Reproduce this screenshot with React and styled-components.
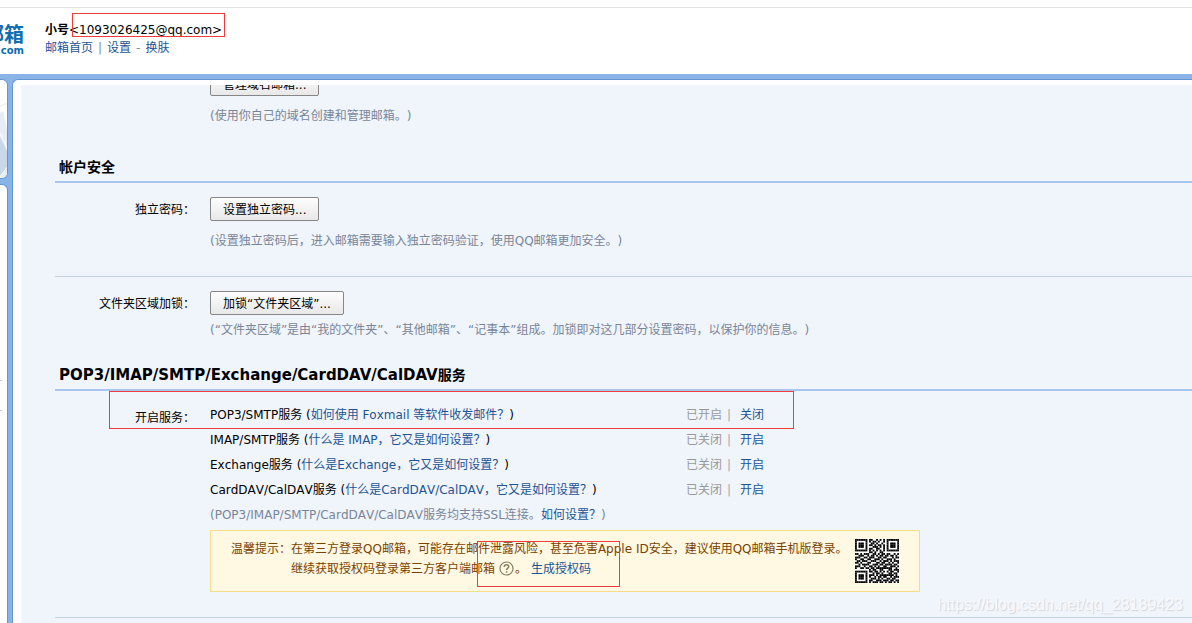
import React from "react";
import styled, { createGlobalStyle } from "styled-components";

const GlobalStyle = createGlobalStyle`
  * {
    box-sizing: border-box;
  }
  body {
    margin: 0;
    background: #fff;
    color: #000;
    font: 12px/20px "DejaVu Sans", "Noto Sans CJK SC", sans-serif;
    font-kerning: none;
    text-spacing-trim: space-all;
    overflow: hidden;
  }
  button {
    font: inherit;
  }
`;

const Page = styled.div`
  position: relative;
  display: flex;
  flex-direction: column;
  height: 100vh;
  overflow: hidden;
`;

const Header = styled.header`
  display: flex;
  flex: none;
  gap: 21px;
  height: 67px;
  margin-top: 7px;
  border-top: 1px solid #dfe3e6;
`;

const Logo = styled.div`
  display: flex;
  flex-direction: column;
  align-items: flex-end;
  width: 24px;
  padding-top: 17px;
  overflow: hidden;
  color: #0f6db0;
  font-weight: bold;
  white-space: nowrap;
`;

const LogoName = styled.span`
  font-size: 20px;
  line-height: 20px;
`;

const LogoDomain = styled.span`
  font-size: 10px;
  line-height: 12px;
`;

const Account = styled.div`
  padding-top: 13px;
  line-height: 18px;
`;

const Email = styled.span`
  position: relative;
`;

const A = styled.a`
  color: #1e5494;
  text-decoration: none;
  &:hover {
    text-decoration: underline;
  }
`;

const Bar = styled.span`
  margin: 0 5px;
  color: ${props => props.$color || "#7d8ea3"};
`;

const Mark = styled.span`
  position: absolute;
  inset: ${props => props.$inset};
  width: ${props => props.$width || "auto"};
  height: ${props => props.$height || "auto"};
  border: 1px solid #f03c3c;
  pointer-events: none;
`;

const Body = styled.div`
  display: flex;
  flex: 1;
  gap: 4px;
  min-height: 0;
  padding-top: 5px;
  background: #8ab4e8;
`;

const Sidebar = styled.aside`
  display: flex;
  flex-direction: column;
  gap: 5px;
  width: 8px;
`;

const SidePanel = styled.div`
  flex: ${props => (props.$grow ? "1" : "0 0 100px")};
  border: solid #6496d2;
  border-width: ${props => (props.$grow ? "1px 1px 0 0" : "1px 1px 1px 0")};
  border-radius: ${props => (props.$grow ? "0 6px 0 0" : "0 6px 6px 0")};
  background: #fff;
  overflow: hidden;
  svg {
    display: block;
  }
`;

const SideGroup = styled.div`
  width: 2px;
  height: ${props => props.$height};
  border-bottom: 1px solid #d0d0d0;
`;

const Main = styled.main`
  display: flex;
  flex: 1;
  min-width: 0;
  padding: 5px 0 0 8px;
  border: solid #6496d2;
  border-width: 1px 0 0 1px;
  border-radius: 6px 0 0 0;
  background: #fff;
`;

const Content = styled.div`
  flex: 1;
  min-width: 0;
  padding-left: 34px;
  overflow: hidden;
  background: #f0f4fb;
`;

const Title = styled.h2`
  margin: ${props => props.$top} 0 0;
  padding: 0 4px 4px;
  border-bottom: 2px solid #a9c7ec;
  font-size: 14px;
  line-height: 20px;
`;

const Protocols = styled.span`
  font-size: 15px;
  font-kerning: normal;
`;

const Row = styled.div`
  position: relative;
  display: grid;
  grid-template-columns: 140px minmax(0, 1fr);
  column-gap: 15px;
  padding-top: 14px;
`;

const ScrolledRow = styled(Row)`
  margin-top: -27px;
`;

const ServiceRow = styled(Row)`
  padding-top: 12px;
`;

const Label = styled.label`
  padding-top: 3px;
  text-align: right;
`;

const ServiceLabel = styled.div`
  padding-top: 5px;
  text-align: right;
`;

const Button = styled.button`
  height: 24px;
  padding: 2px 12px 0;
  border: 1px solid #868686;
  border-radius: 2px;
  background: linear-gradient(#fdfdfd, #e8e8e8);
  color: #000;
  cursor: pointer;
`;

const Hint = styled.p`
  margin: ${props => props.$top || "10px"} 0 0;
  color: #798699;
`;

const Divider = styled.hr`
  height: 1px;
  margin: 25px 0 0;
  border: 0;
  background: #c5d2e2;
`;

const Service = styled.div`
  display: grid;
  grid-template-columns: 476px 1fr;
  line-height: 25px;
`;

const State = styled.span`
  color: #999;
`;

const Note = styled.div`
  color: #798699;
  line-height: 25px;
`;

const Notice = styled.div`
  position: relative;
  display: flex;
  justify-content: space-between;
  max-width: 710px;
  height: 62px;
  margin-top: 2px;
  padding: 8px 20px;
  border: 1px solid #f8dc88;
  background: #fff8e2;
  color: #7b4100;
  white-space: nowrap;
`;

const NoticeText = styled.div`
  display: flex;
`;

const HelpIcon = styled.svg`
  margin: 0 1px 0 4px;
  vertical-align: -3px;
`;

const NoticeLink = styled(A)`
  margin-left: 4px;
`;

const Watermark = styled.div`
  position: absolute;
  right: 9px;
  bottom: 8px;
  color: #f8fafc;
  font: 16px/20px "Liberation Sans", sans-serif;
  text-shadow: 1px 1px 1px #d0d4da;
`;

const services = [
  { name: "POP3/SMTP服务", help: "如何使用 Foxmail 等软件收发邮件？", open: true },
  { name: "IMAP/SMTP服务", help: "什么是 IMAP，它又是如何设置？" },
  { name: "Exchange服务", help: "什么是Exchange，它又是如何设置？" },
  { name: "CardDAV/CalDAV服务", help: "什么是CardDAV/CalDAV，它又是如何设置？" }
];

const qrRows = [
  "1111111011001010101111111",
  "1000001010110100101000001",
  "1011101001101001001011101",
  "1011101011010110101011101",
  "1011101000111010101011101",
  "1000001011001100101000001",
  "1111111010101010101111111",
  "0000000011010011000000000",
  "1101011100110101101100101",
  "0011100101101011011011010",
  "1110011011100110110001011",
  "1001100110011101001110100",
  "0110111001110010111010111",
  "1101000110001101100101001",
  "0010111100111011011110110",
  "1110010011010100110011101",
  "1001101101101111111110010",
  "0000000010110011000110111",
  "1111111011011010101011001",
  "1000001000101101000110110",
  "1011101011101011111111010",
  "1011101010010110110010111",
  "1011101001110101001101100",
  "1000001011001110111011011",
  "1111111010111011010110101"
];

const QrCode = () => (
  <svg width="44" height="44" viewBox="0 0 25 25">
    <rect width="25" height="25" fill="#fff" />
    {qrRows.map((row, y) =>
      row
        .split("")
        .map((cell, x) =>
          cell === "1" ? (
            <rect key={`${x}-${y}`} x={x} y={y} width="1.04" height="1.04" />
          ) : null
        )
    )}
  </svg>
);

const Help = () => (
  <HelpIcon width="15" height="15" viewBox="0 0 15 15" fill="none" stroke="#85805f">
    <circle cx="7.5" cy="7.5" r="6.5" strokeWidth="1.2" />
    <path d="M5.3 6V5.5C5.3 4.3 6.2 3.7 7.5 3.7S9.8 4.4 9.8 5.6C9.8 7.1 7.6 7.2 7.6 9" strokeWidth="1.5" />
    <path d="M7.6 10.2V11.7" strokeWidth="1.6" />
  </HelpIcon>
);

const SideArt = () => (
  <svg width="8" height="100" viewBox="0 0 8 100">
    <path d="M0 27L4 24L8 24" fill="none" stroke="#e3eaf2" />
    <path d="M0 33L3 31L8 53V100H0Z" fill="#e6edf5" />
    <path d="M0 57Q5 66 8 74V88L0 96Z" fill="#c9d8e9" />
    <path d="M0 53Q5 62 8 71M0 97L8 86" fill="none" stroke="#fff" />
  </svg>
);

const App = () => (
  <Page lang="zh-CN">
    <GlobalStyle />
    <Header>
      <Logo>
        <LogoName>邮箱</LogoName>
        <LogoDomain>.com</LogoDomain>
      </Logo>
      <Account>
        <div>
          <b>小号</b>
          <Email>
            &lt;1093026425@qq.com&gt;
            <Mark $inset="-10px -3px 0 3px" />
          </Email>
        </div>
        <div>
          <A href="#">邮箱首页</A>
          <Bar>|</Bar>
          <A href="#">设置</A>
          <Bar>-</Bar>
          <A href="#">换肤</A>
        </div>
      </Account>
    </Header>
    <Body>
      <Sidebar>
        <SidePanel>
          <SideArt />
        </SidePanel>
        <SidePanel $grow>
          <SideGroup $height="196px" />
          <SideGroup $height="30px" />
        </SidePanel>
      </Sidebar>
      <Main>
        <Content>
          <ScrolledRow>
            <span />
            <div>
              <Button type="button">管理域名邮箱...</Button>
              <Hint>(使用你自己的域名创建和管理邮箱。)</Hint>
            </div>
          </ScrolledRow>

          <Title $top="31px">帐户安全</Title>
          <Row>
            <Label htmlFor="password">独立密码：</Label>
            <div>
              <Button id="password" type="button">设置独立密码...</Button>
              <Hint>(设置独立密码后，进入邮箱需要输入独立密码验证，使用QQ邮箱更加安全。)</Hint>
            </div>
          </Row>
          <Divider />
          <Row>
            <Label htmlFor="lock">文件夹区域加锁：</Label>
            <div>
              <Button id="lock" type="button">加锁“文件夹区域”...</Button>
              <Hint $top="5px">
                (“文件夹区域”是由“我的文件夹”、“其他邮箱”、“记事本”组成。加锁即对这几部分设置密码，以保护你的信息。)
              </Hint>
            </div>
          </Row>

          <Title $top="25px">
            <Protocols>POP3/IMAP/SMTP/Exchange/CardDAV/CalDAV</Protocols>服务
          </Title>
          <ServiceRow>
            <ServiceLabel>开启服务：</ServiceLabel>
            <div>
              {services.map(({ name, help, open }) => (
                <Service key={name}>
                  <span>
                    {name} (<A href="#">{help}</A>)
                  </span>
                  <span>
                    <State>{open ? "已开启" : "已关闭"}</State>
                    <Bar $color="#aaa">|</Bar>{" "}
                    <A href="#">{open ? "关闭" : "开启"}</A>
                  </span>
                </Service>
              ))}
              <Note>
                (POP3/IMAP/SMTP/CardDAV/CalDAV服务均支持SSL连接。
                <A href="#">如何设置？</A>)
              </Note>
              <Notice>
                <NoticeText>
                  <div>温馨提示：</div>
                  <div>
                    在第三方登录QQ邮箱，可能存在邮件泄露风险，甚至危害Apple ID安全，建议使用QQ邮箱手机版登录。
                    <br />
                    继续获取授权码登录第三方客户端邮箱
                    <Help />。
                    <NoticeLink href="#">生成授权码</NoticeLink>
                  </div>
                </NoticeText>
                <QrCode />
                <Mark $inset="10px auto auto 266px" $width="143px" $height="46px" />
              </Notice>
            </div>
            <Mark $inset="0 auto auto 54px" $width="685px" $height="38px" />
          </ServiceRow>
          <Divider />
        </Content>
      </Main>
    </Body>
    <Watermark>https://blog.csdn.net/qq_28189423</Watermark>
  </Page>
);

export default App;
